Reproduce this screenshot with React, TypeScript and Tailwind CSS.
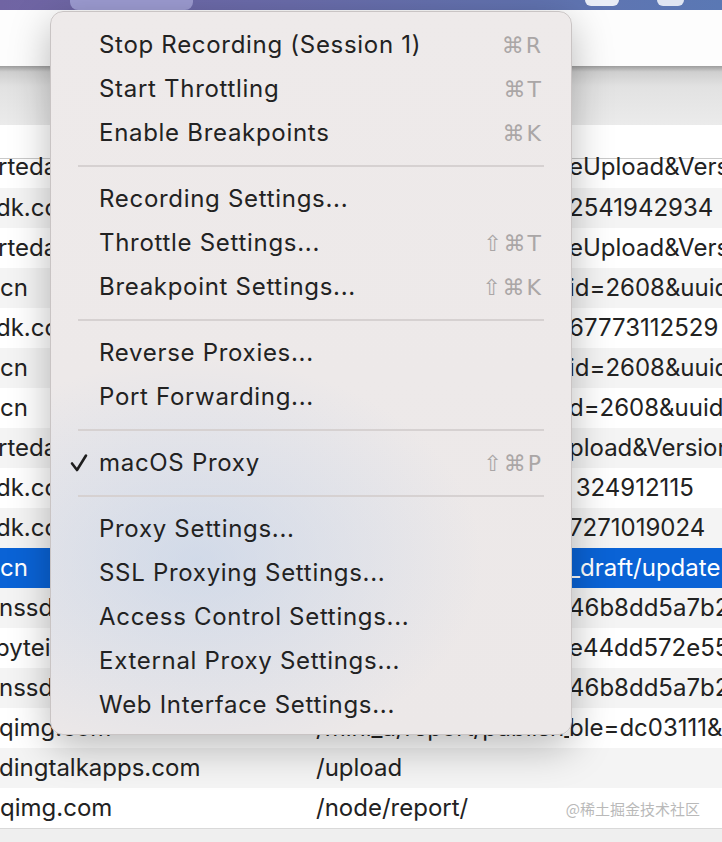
import React from 'react';

interface Row {
  host: string;
  hostClass: string;
  head: string;
  tail: string;
}

interface MenuItem {
  label: string;
  keys?: string;
  checked?: boolean;
}

const rows: Row[] = [
  { host: 'rtedance.com', hostClass: '-ml-[2px]', head: '/monitor_web/settings/brows', tail: 'eUpload&Version=1' },
  { host: 'dk.com', hostClass: '-ml-[4px]', head: '/v1/list?aid=1&t=16', tail: '2541942934' },
  { host: 'rtedance.com', hostClass: '-ml-[2px]', head: '/monitor_web/settings/brows', tail: 'eUpload&Version=1' },
  { host: 'cn', hostClass: 'ml-0', head: '/v1/app/config?app_id=1&u', tail: 'id=2608&uuid=7' },
  { host: 'dk.com', hostClass: '-ml-[4px]', head: '/v1/list?aid=1&t=16', tail: '67773112529' },
  { host: 'cn', hostClass: 'ml-0', head: '/v1/app/config?app_id=1&u', tail: 'id=2608&uuid=7' },
  { host: 'cn', hostClass: 'ml-0', head: '/v1/app/config?app_id=1&ui', tail: 'd=2608&uuid=7' },
  { host: 'rtedance.com', hostClass: '-ml-[2px]', head: '/monitor_web/settings/browseU', tail: 'pload&Version=1' },
  { host: 'dk.com', hostClass: '-ml-[4px]', head: '/v1/list?aid=1&t=1677', tail: '\u00a0324912115' },
  { host: 'dk.com', hostClass: '-ml-[4px]', head: '/v1/list?aid=1&t=16', tail: '7271019024' },
  { host: 'cn', hostClass: 'ml-0', head: '/content_api/v1/article', tail: '_draft/update' },
  { host: 'nssdk.com', hostClass: '-ml-[1px]', head: '/v1/settings?key=c1', tail: '46b8dd5a7b2f' },
  { host: 'byteimg.com', hostClass: '-ml-[5px]', head: '/obj/static/c7a0bd5d', tail: 'e44dd572e55' },
  { host: 'nssdk.com', hostClass: '-ml-[1px]', head: '/v1/settings?key=c1', tail: '46b8dd5a7b2f' },
  { host: 'qimg.com', hostClass: '-ml-[1px]', head: '/mini_a/report/publish_ta', tail: 'ble=dc03111&id' },
  { host: 'dingtalkapps.com', hostClass: '-ml-[1px]', head: '/upload', tail: '' },
  { host: 'qimg.com', hostClass: 'ml-0', head: '/node/report/', tail: '' },
];

const groups: MenuItem[][] = [
  [
    { label: 'Stop Recording (Session 1)', keys: '⌘R' },
    { label: 'Start Throttling', keys: '⌘T' },
    { label: 'Enable Breakpoints', keys: '⌘K' },
  ],
  [
    { label: 'Recording Settings...' },
    { label: 'Throttle Settings...', keys: '⇧⌘T' },
    { label: 'Breakpoint Settings...', keys: '⇧⌘K' },
  ],
  [{ label: 'Reverse Proxies...' }, { label: 'Port Forwarding...' }],
  [{ label: 'macOS Proxy', keys: '⇧⌘P', checked: true }],
  [
    { label: 'Proxy Settings...' },
    { label: 'SSL Proxying Settings...' },
    { label: 'Access Control Settings...' },
    { label: 'External Proxy Settings...' },
    { label: 'Web Interface Settings...' },
  ],
];

function Check() {
  return (
    <svg width="20" height="20" viewBox="0 0 20 20" className="text-[#1e1e1e]">
      <path d="M3 10.5 L8 17 L17 2.5" fill="none" stroke="currentColor" strokeWidth="2.6" strokeLinecap="round" strokeLinejoin="round" />
    </svg>
  );
}

function Menu() {
  return (
    <div className="absolute left-[50px] top-[11px] w-[522px] h-[724px] rounded-[13px] border border-[#c9c4c4] bg-[radial-gradient(ellipse_55%_28%_at_28%_76%,rgba(176,200,232,0.45),transparent),linear-gradient(#eeeaea,#ece8e8)] shadow-[0_12px_40px_rgba(0,0,0,0.28)] pt-[11px] pb-[8px] flex flex-col">
      {groups.map((group, gi) => (
        <div key={gi} className="flex flex-col">
          {gi > 0 && (
            <div className="h-[22px] flex items-center px-[27px]">
              <div className="h-[2px] w-full bg-[#d6d1d1]" />
            </div>
          )}
          {group.map((item) => (
            <div key={item.label} className="h-[44px] flex items-center pr-[28px] text-[24px] text-[#222]">
              <div className="w-[48px] flex justify-end pr-[10px]">{item.checked && <Check />}</div>
              <span className="flex-1 tracking-[0.7px]">{item.label}</span>
              {item.keys && (
                <span className="text-[#aaa6a6] tracking-[2px] font-[family-name:'DejaVu_Sans',Inter,sans-serif] text-[22px]">{item.keys}</span>
              )}
            </div>
          ))}
        </div>
      ))}
    </div>
  );
}

export default function App() {
  return (
    <div className="relative w-[722px] h-[842px] overflow-hidden bg-white font-[family-name:Inter,'Noto_Sans',sans-serif]">
      <div className="h-[10px] flex bg-[linear-gradient(90deg,#7064a3,#6a6cab_40%,#5a78b4)]">
        <div className="ml-[70px] w-[123px] h-[10px] rounded-b-[8px] bg-[#9c9bd1]" />
        <div className="ml-[392px] w-[34px] h-[6px] rounded-b-[6px] bg-[#e9edf6]" />
        <div className="ml-[38px] w-[27px] h-[6px] rounded-b-[6px] bg-[#dfe5f2]" />
      </div>
      <div className="h-[56px] bg-[#fdfdfd]" />
      <div className="h-[59px] bg-[linear-gradient(#9d9d9d,#cfcfcf_10%,#e2e2e2_35%,#ebebeb)]" />
      <div className="h-[33px] bg-white" />
      <div className="border-t border-[#c9c9c9] text-[24px] text-[#222]">
        {rows.map((row, i) => {
          const selected = i === 10;
          const bg = selected ? 'bg-[#0a63d6] text-white' : i % 2 === 1 ? 'bg-[#f4f4f4]' : 'bg-white';
          const height = i === 0 ? 'h-[29px] items-end pb-[7px]' : 'h-[40px] items-center';
          return (
            <div key={i} className={`flex whitespace-nowrap leading-[28px] ${height} ${bg}`}>
              <div className="w-[316px] overflow-hidden">
                <span className={`inline-block ${row.hostClass}`}>{row.host}</span>
              </div>
              <div className="w-[253px] overflow-hidden">{row.head}</div>
              <div className="flex-1 overflow-hidden">{row.tail}</div>
            </div>
          );
        })}
      </div>
      <div className="h-[14px] border-t border-[#d9d9d9] bg-[#efefef]" />
      <Menu />
      <div className="absolute right-[22px] bottom-[22px] text-[15px] text-[#b9b9b9] font-[family-name:'Noto_Sans_CJK_SC',sans-serif]">
        @稀土掘金技术社区
      </div>
    </div>
  );
}
